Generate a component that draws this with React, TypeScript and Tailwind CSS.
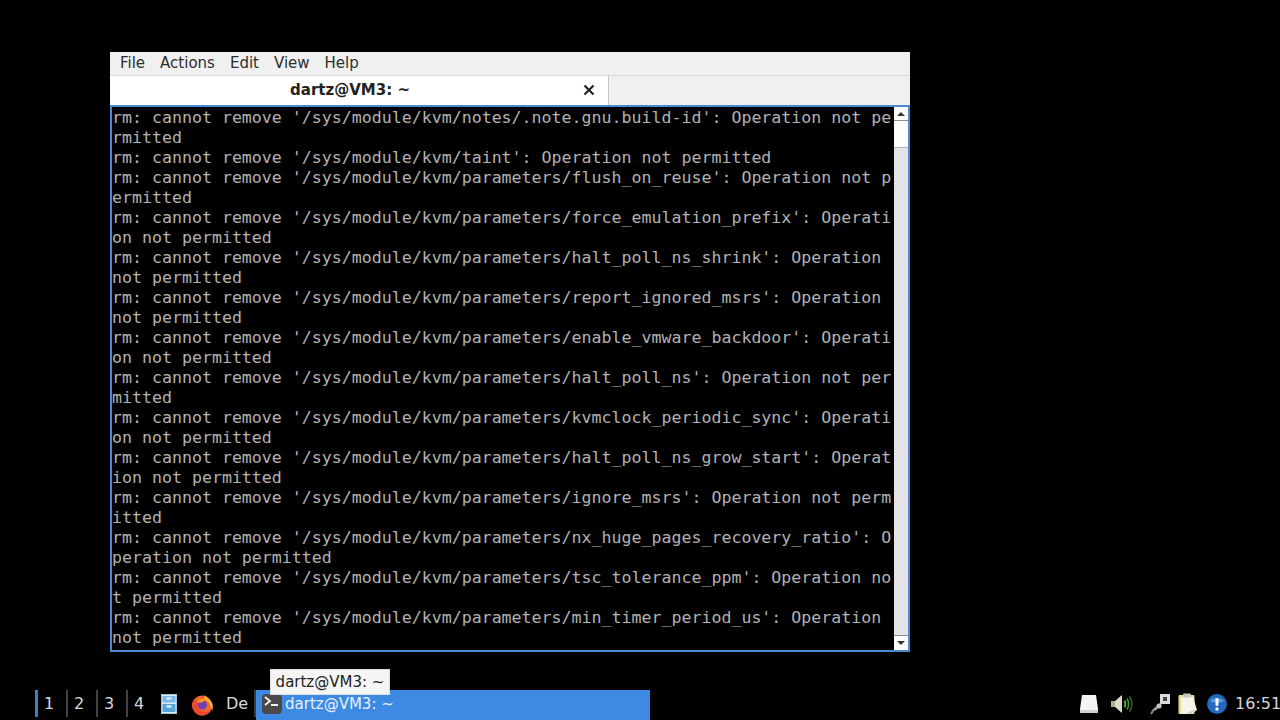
const lines = [
  "rm: cannot remove '/sys/module/kvm/notes/.note.gnu.build-id': Operation not pe",
  "rmitted",
  "rm: cannot remove '/sys/module/kvm/taint': Operation not permitted",
  "rm: cannot remove '/sys/module/kvm/parameters/flush_on_reuse': Operation not p",
  "ermitted",
  "rm: cannot remove '/sys/module/kvm/parameters/force_emulation_prefix': Operati",
  "on not permitted",
  "rm: cannot remove '/sys/module/kvm/parameters/halt_poll_ns_shrink': Operation",
  "not permitted",
  "rm: cannot remove '/sys/module/kvm/parameters/report_ignored_msrs': Operation",
  "not permitted",
  "rm: cannot remove '/sys/module/kvm/parameters/enable_vmware_backdoor': Operati",
  "on not permitted",
  "rm: cannot remove '/sys/module/kvm/parameters/halt_poll_ns': Operation not per",
  "mitted",
  "rm: cannot remove '/sys/module/kvm/parameters/kvmclock_periodic_sync': Operati",
  "on not permitted",
  "rm: cannot remove '/sys/module/kvm/parameters/halt_poll_ns_grow_start': Operat",
  "ion not permitted",
  "rm: cannot remove '/sys/module/kvm/parameters/ignore_msrs': Operation not perm",
  "itted",
  "rm: cannot remove '/sys/module/kvm/parameters/nx_huge_pages_recovery_ratio': O",
  "peration not permitted",
  "rm: cannot remove '/sys/module/kvm/parameters/tsc_tolerance_ppm': Operation no",
  "t permitted",
  "rm: cannot remove '/sys/module/kvm/parameters/min_timer_period_us': Operation",
  "not permitted",
];

const menus = ["File", "Actions", "Edit", "View", "Help"];

const FileManagerIcon = () => (
  <svg width="16" height="20" viewBox="0 0 16 20">
    <rect x="0.5" y="0.5" width="15" height="19" fill="#d8ecf8" stroke="#9cc4e0" />
    <rect x="1.5" y="2" width="13" height="6.5" fill="#7ab8e6" />
    <rect x="1.5" y="10" width="13" height="8" fill="#5aa2dc" />
    <rect x="5.5" y="3.5" width="5" height="2" fill="#eef6fb" />
    <rect x="5.5" y="11.5" width="5" height="2" fill="#eef6fb" />
  </svg>
);

const FirefoxIcon = () => (
  <svg width="22" height="24" viewBox="0 0 22 24">
    <circle cx="11" cy="13.5" r="10" fill="#f4652c" />
    <path d="M13 1c.5 3 4 4.5 6.5 7.5 2.5 3 3 7 1.5 10.5-1-5-3-9.500-8-12 1-2 .8-4 0-6z" fill="#fcb32c" />
    <path d="M1 11c0 7 4.500 12.500 10 12.500 4.500 0 8-2.500 9.500-6-3.500 3-9 3.500-12-.5-2-2.500-1.500-4.500-.5-6l-3.500-3-3.500 3z" fill="#ec4a2c" />
    <circle cx="11.5" cy="13" r="4.5" fill="#7040b4" />
    <path d="M6 10c2-3 7-4 10-1.500-2.500 0-4 .5-4.500 2-2 .2-4 0-5.500-.5z" fill="#fa9a2a" />
  </svg>
);

const TerminalIcon = () => (
  <div className="w-5 h-5 bg-[#4a4a4a] rounded-sm flex-none">
    <svg width="20" height="20" viewBox="0 0 20 20">
      <path d="M3 3l5 4-5 4" fill="none" stroke="#f4f4f4" strokeWidth="1.8" />
      <path d="M9 11h7" stroke="#f4f4f4" strokeWidth="2" />
    </svg>
  </div>
);

const DriveIcon = () => (
  <svg width="20" height="20" viewBox="0 0 20 20">
    <path d="M3 1h14l2 14v4H1v-4z" fill="#f4f4f2" />
    <rect x="1" y="16" width="18" height="3" fill="#d0d0cc" />
  </svg>
);

const VolumeIcon = () => (
  <svg width="24" height="24" viewBox="0 0 24 24">
    <path d="M1 9h4v6H1z" fill="#b0b090" />
    <path d="M5 9l7-6v18l-7-6z" fill="#dcdcc4" />
    <path d="M14.500 8.500c1.200 2.200 1.200 4.800 0 7" fill="none" stroke="#58b840" strokeWidth="1.6" />
    <path d="M17 6.500c2 3.500 2 7.500 0 11" fill="none" stroke="#3f9a30" strokeWidth="1.6" />
    <path d="M19.500 4.500c3 4.500 3 10.500 0 15" fill="none" stroke="#2a6e22" strokeWidth="1.6" />
  </svg>
);

const NetworkIcon = () => (
  <svg width="22" height="22" viewBox="0 0 22 22">
    <rect x="11" y="1" width="10" height="10" fill="#dcdcdc" />
    <rect x="14" y="4" width="4" height="4" fill="#444444" />
    <path d="M12 11l-7 6" stroke="#a8a8a8" strokeWidth="2.5" />
    <path d="M5 16l-3 5" stroke="#8c8c8c" strokeWidth="2" />
    <circle cx="10" cy="13" r="2.5" fill="#c4c4c4" />
  </svg>
);

const ClipboardIcon = () => (
  <svg width="20" height="22" viewBox="0 0 20 22">
    <rect x="0.5" y="2" width="16" height="19" rx="1" fill="#e8d98c" />
    <path d="M3 4h12l4 13-6 4H3z" fill="#f6f4ea" />
    <path d="M9 20l9-4-5 5z" fill="#cfcbb8" />
    <rect x="5" y="0.5" width="8" height="4" rx="1" fill="#c8c8c0" />
  </svg>
);

const InfoIcon = () => (
  <svg width="20" height="20" viewBox="0 0 20 20">
    <circle cx="10" cy="10" r="10" fill="#2469c0" />
    <path d="M3 7a8 6 0 0 1 14 0c-3 2-11 2-14 0z" fill="#5c9ae0" />
    <rect x="8.5" y="4" width="3" height="8" rx="1.5" fill="#ffffff" />
    <circle cx="10" cy="15" r="1.7" fill="#ffffff" />
  </svg>
);

export default function App() {
  return (
    <div className="h-screen bg-black flex flex-col overflow-hidden font-['DejaVu_Sans',sans-serif]">
      {/* terminal window */}
      <div className="mt-[52px] ml-[110px] w-[800px] h-[600px] flex flex-col">
        <div className="h-[23px] bg-[#f0f0f0] flex items-center gap-[15px] pl-[10px] text-[15px] text-[#2e2e2e]">
          {menus.map((m) => (
            <span key={m}>{m}</span>
          ))}
        </div>
        <div className="h-[30px] bg-[#f0f0f0] border-t border-[#d8d8d8] flex">
          <div className="w-[499px] bg-white border-r border-[#c4c4c4] flex items-center relative">
            <span className="w-full text-center text-[15px] font-bold text-[#222222] pr-[18px]">dartz@VM3: ~</span>
            <svg className="absolute left-[473px] top-[8px]" width="12" height="12" viewBox="0 0 12 12">
              <path d="M1.5 1.5l9 9M10.5 1.5l-9 9" stroke="#222222" strokeWidth="2.2" />
            </svg>
          </div>
        </div>
        <div className="flex-1 min-h-0 bg-black border-2 border-[#4a8ad0] flex">
          <pre className="flex-1 overflow-hidden pt-px font-['DejaVu_Sans_Mono',monospace] text-[16.6px] leading-[20px] text-[#b2b2b2]">
            {lines.join("\n")}
          </pre>
          {/* scrollbar */}
          <div className="w-[14px] flex-none bg-[#e4e4e4] flex flex-col">
            <div className="h-[14px] bg-white border-b border-[#8c8c8c] flex items-center justify-center">
              <div className="w-0 h-0 border-x-[4px] border-x-transparent border-b-[4px] border-b-[#333333]" />
            </div>
            <div className="h-[27px] bg-white border-b border-[#b4b4b4]" />
            <div className="flex-1" />
            <div className="h-[15px] bg-white border-t border-[#8c8c8c] flex items-center justify-center">
              <div className="w-0 h-0 border-x-[4px] border-x-transparent border-t-[4px] border-t-[#333333]" />
            </div>
          </div>
        </div>
      </div>

      {/* panel */}
      <div className="mt-auto h-[30px] flex items-stretch relative text-[16px] text-[#d8d8d8]">
        <div className="ml-[35px] w-[31px] border-l-[3px] border-l-[#3f7fc8] mb-[3px] flex items-center justify-center pr-[6px]">1</div>
        <div className="w-[30px] border-l-[2px] border-l-[#444444] mb-[3px] flex items-center justify-center pr-[6px]">2</div>
        <div className="w-[30px] border-l-[2px] border-l-[#444444] mb-[3px] flex items-center justify-center pr-[6px]">3</div>
        <div className="w-[30px] border-l-[2px] border-l-[#444444] mb-[3px] flex items-center justify-center pr-[6px]">4</div>
        <div className="w-[26px] flex items-center justify-center mb-[3px]">
          <FileManagerIcon />
        </div>
        <div className="w-[40px] flex items-center justify-center mb-[3px]">
          <FirefoxIcon />
        </div>
        <div className="w-[30px] flex items-center justify-center mb-[3px]">De</div>
        <div className="ml-[2px] w-[2px] bg-[#3a3a3a] mb-[3px]" />
        <div className="w-[394px] bg-[#3d8ae2] flex items-center pl-[6px] gap-[3px] text-[#e8f0fa] text-[15px] pb-[2px]">
          <TerminalIcon />
          <span>dartz@VM3: ~</span>
        </div>
        <div className="ml-auto flex items-center pb-[2px]">
          <div className="w-[20px] mr-[11px] flex"><DriveIcon /></div>
          <div className="w-[24px] mr-[15px] flex"><VolumeIcon /></div>
          <div className="w-[22px] mr-[7px] flex"><NetworkIcon /></div>
          <div className="w-[20px] mr-[9px] flex"><ClipboardIcon /></div>
          <div className="w-[20px] mr-[8px] flex"><InfoIcon /></div>
          <span className="w-[45px] text-[16px] text-[#d4d4d4]">16:51</span>
        </div>
        {/* tooltip */}
        <div className="absolute left-[270px] top-[-21px] w-[120px] h-[26px] bg-[#f5f5f5] border border-[#dcdcdc] flex items-center justify-center text-[15px] text-[#222222]">
          dartz@VM3: ~
        </div>
      </div>
    </div>
  );
}
